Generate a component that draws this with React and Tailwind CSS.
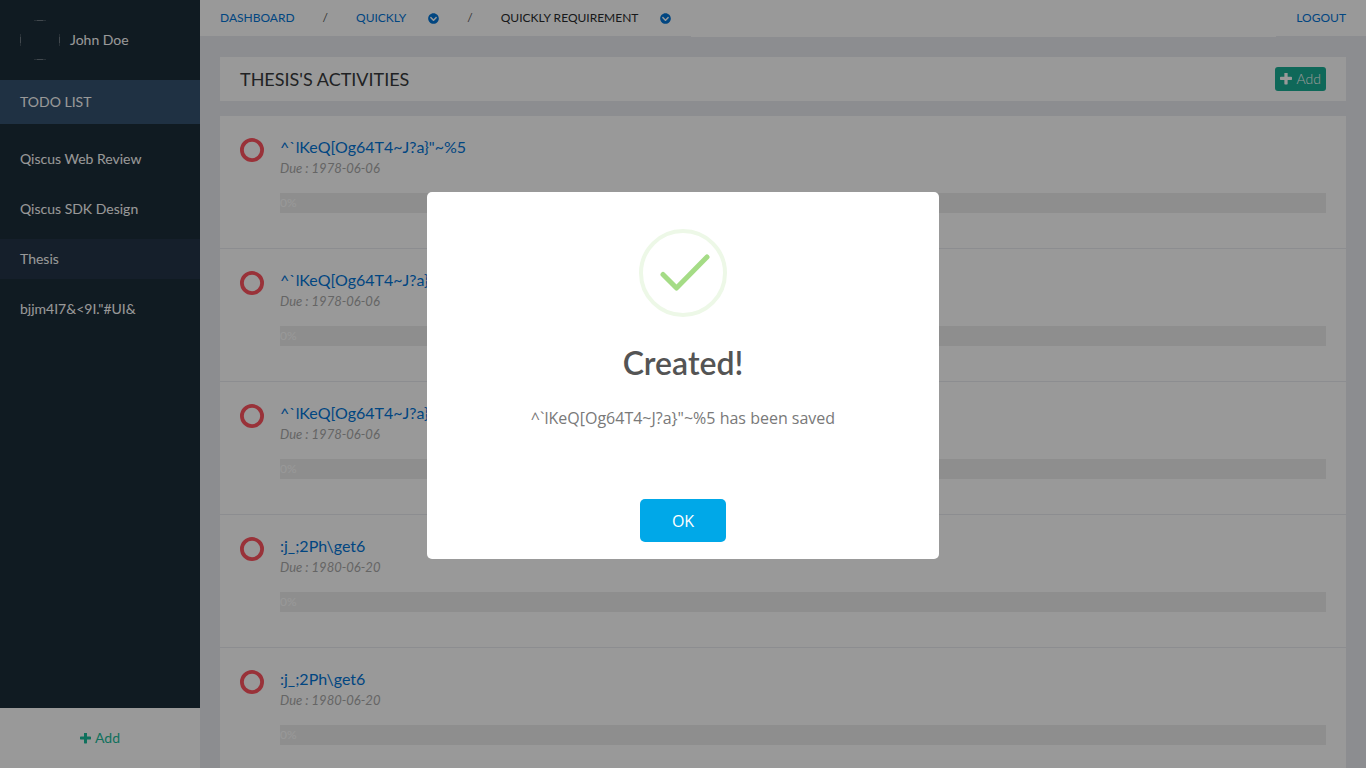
import { FaChevronCircleDown } from "react-icons/fa";

const projects = [
  { name: "Qiscus Web Review" },
  { name: "Qiscus SDK Design" },
  { name: "Thesis", active: true },
  { name: "bjjm4I7&<9I.\"#UI&" },
];

const savedTitle = "^`lKeQ[Og64T4~J?a}\"~%5";

const activities = [
  { id: 1, title: savedTitle, due: "1978-06-06", progress: 0 },
  { id: 2, title: savedTitle, due: "1978-06-06", progress: 0 },
  { id: 3, title: savedTitle, due: "1978-06-06", progress: 0 },
  { id: 4, title: ":j_;2Ph\\get6", due: "1980-06-20", progress: 0 },
  { id: 5, title: ":j_;2Ph\\get6", due: "1980-06-20", progress: 0 },
];

function PlusIcon({ className }) {
  return (
    <svg viewBox="192 192 1408 1408" className={`fill-current ${className}`} aria-hidden="true">
      <path d="M1600 736v192q0 40-28 68t-68 28h-416v416q0 40-28 68t-68 28h-192q-40 0-68-28t-28-68v-416h-416q-40 0-68-28t-28-68v-192q0-40 28-68t68-28h416v-416q0-40 28-68t68-28h192q40 0 68 28t28 68v416h416q40 0 68 28t28 68z" />
    </svg>
  );
}

function Sidebar() {
  return (
    <aside className="flex w-[200px] shrink-0 flex-col bg-[#1c2d39] text-sm text-white">
      <div className="flex h-20 items-center gap-2.5 px-5">
        <svg viewBox="0 0 40 40" className="size-10" fill="none" stroke="#8a9299" aria-hidden="true">
          <path d="M14 .5h12M14 39.5h12M.5 14v12M39.5 14v12" strokeOpacity=".35" />
          <path d="M17 .5h6M17 39.5h6M.5 17v6M39.5 17v6" strokeOpacity=".6" />
        </svg>
        <span>John Doe</span>
      </div>
      <h2 className="flex h-11 items-center bg-[#345370] px-5">TODO LIST</h2>
      <nav className="flex flex-1 flex-col gap-2.5 pt-[15px]">
        {projects.map((p) => (
          <a
            key={p.name}
            href="#"
            className={`flex h-10 items-center px-5 ${p.active ? "bg-[#233548]" : ""}`}
          >
            {p.name}
          </a>
        ))}
      </nav>
      <button type="button" className="flex h-[60px] items-center justify-center gap-1 bg-white text-[#1abc9c]">
        <PlusIcon className="size-[11px]" />
        Add
      </button>
    </aside>
  );
}

function TopBar() {
  return (
    <header className="flex h-[37px] shrink-0 justify-between bg-white text-xs text-[#0275d8]">
      <nav className="flex items-center border-b border-[#e9ebf1] px-5">
        <a href="#">DASHBOARD</a>
        <span className="px-7 text-[#555]">/</span>
        <a href="#">QUICKLY</a>
        <button type="button" aria-label="Quickly menu" className="ml-[22px]">
          <FaChevronCircleDown className="size-[11px]" />
        </button>
        <span className="px-7 text-[#555]">/</span>
        <a href="#" className="text-[#292b2c]">QUICKLY REQUIREMENT</a>
        <button type="button" aria-label="Quickly requirement menu" className="ml-[22px]">
          <FaChevronCircleDown className="size-[11px]" />
        </button>
      </nav>
      <div className="flex items-center border-b border-[#e9ebf1] px-5">
        <a href="#">LOGOUT</a>
      </div>
    </header>
  );
}

function Activity({ title, due, progress }) {
  return (
    <li className="flex gap-4 border-b border-[#e9ebf1] px-5 pt-[22px] pb-[35px]">
      <svg viewBox="0 0 24 24" className="size-6 shrink-0" fill="none" stroke="#ff5460" strokeWidth="3.8" aria-hidden="true">
        <circle cx="12" cy="12" r="10.1" />
      </svg>
      <div className="min-w-0 flex-1">
        <a href="#" className="block text-base leading-[18px] text-[#0275d8]">{title}</a>
        <p className="text-[13px] leading-6 text-[#a9a9a9] italic">Due : {due}</p>
        <div className="mt-[13px] h-5 bg-[#ededed] text-xs leading-5 text-white">
          <div className="h-5 bg-[#0275d8]" style={{ width: `${progress}%` }}>{progress}%</div>
        </div>
      </div>
    </li>
  );
}

function SavedDialog() {
  return (
    <div className="fixed inset-0 flex items-center justify-center bg-black/40 pb-[17px]">
      <div
        role="dialog"
        aria-modal="true"
        aria-labelledby="saved-title"
        className="flex w-[512px] flex-col items-center rounded-[5px] bg-white px-4 pt-[37px] pb-[17px] text-center"
      >
        <svg viewBox="0 0 88 88" className="size-[88px]" fill="none" aria-hidden="true">
          <circle cx="44" cy="44" r="42" stroke="#edf8e7" strokeWidth="4" />
          <path d="M24 45.500L37.500 59L68 28" stroke="#a5dc86" strokeWidth="5" strokeLinecap="round" strokeLinejoin="round" />
        </svg>
        <h1 id="saved-title" className="mt-[26px] text-[32px] leading-10 font-semibold text-[#545454]">Created!</h1>
        <p className="mt-[23px] font-['Open_Sans'] text-base leading-6 text-[#797979]">
          {savedTitle} has been saved
        </p>
        <button
          type="button"
          className="mt-[69px] h-[43px] rounded-[5px] bg-[#00a8e8] px-8 font-['Open_Sans'] text-base text-white"
        >
          OK
        </button>
      </div>
    </div>
  );
}

export default function App() {
  return (
    <div className="flex h-screen overflow-hidden bg-[#e9ebf1] font-[Lato,sans-serif]">
      <Sidebar />
      <div className="flex min-w-0 flex-1 flex-col">
        <TopBar />
        <main className="flex min-h-0 flex-1 flex-col gap-[15px] overflow-hidden px-5 pt-5">
          <div className="flex h-11 shrink-0 items-center justify-between bg-white px-5">
            <h1 className="text-lg text-[#373a3c]">THESIS'S ACTIVITIES</h1>
            <button type="button" className="flex h-6 items-center gap-[5px] rounded-[3px] bg-[#1aae94] px-[5px] text-sm font-light text-white">
              <PlusIcon className="size-3" />
              Add
            </button>
          </div>
          <ul className="bg-white">
            {activities.map((a) => (
              <Activity key={a.id} {...a} />
            ))}
          </ul>
        </main>
      </div>
      <SavedDialog />
    </div>
  );
}
